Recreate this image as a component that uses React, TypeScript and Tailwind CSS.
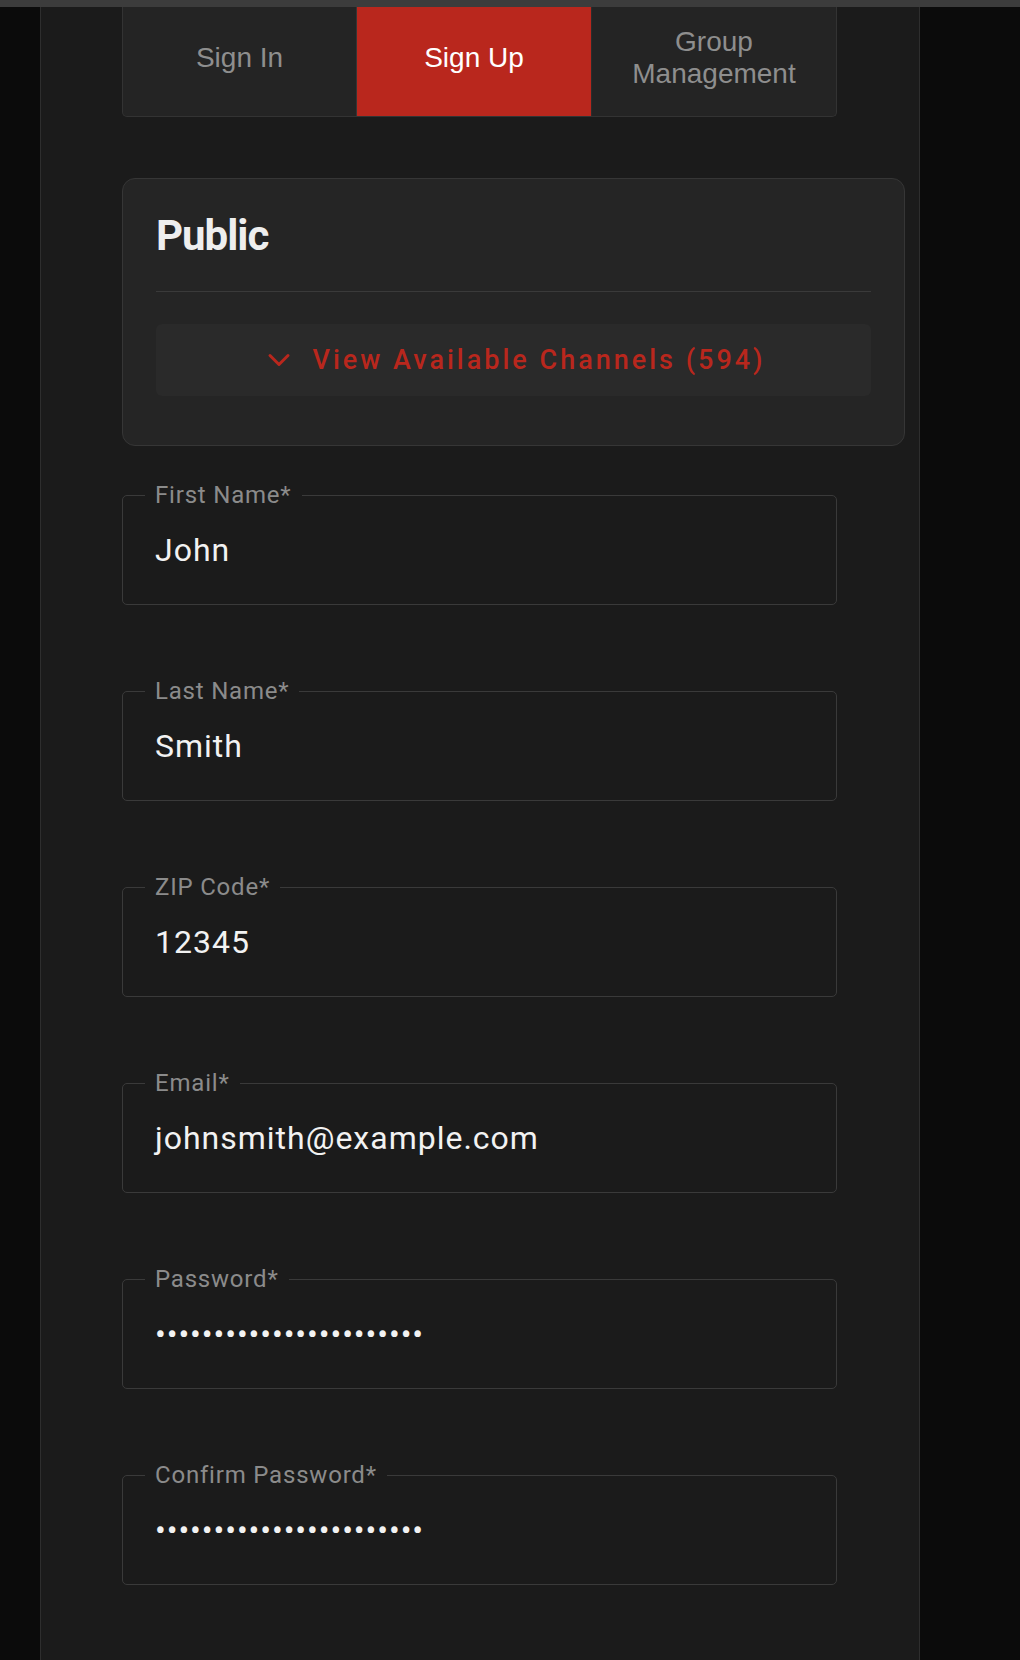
import { ChevronDown } from 'lucide-react';

interface Field {
  label: string;
  value: string;
  secret?: boolean;
}

const fields: Field[] = [
  { label: 'First Name*', value: 'John' },
  { label: 'Last Name*', value: 'Smith' },
  { label: 'ZIP Code*', value: '12345' },
  { label: 'Email*', value: 'johnsmith@example.com' },
  { label: 'Password*', value: '•'.repeat(23), secret: true },
  { label: 'Confirm Password*', value: '•'.repeat(23), secret: true },
];

const roboto = { fontFamily: 'Roboto, "Noto Sans", sans-serif' };
const helv = { fontFamily: '"Liberation Sans", Arial, sans-serif' };

function Tabs() {
  return (
    <div
      className="flex h-[117px] w-[715px] overflow-hidden rounded-b-[5px] border-x border-b border-[#333333] bg-[#242424] text-[28px] leading-[32px]"
      style={helv}
    >
      <div className="flex w-[234px] items-center justify-center border-r border-[#363636] text-[#8e8e8e]">
        Sign In
      </div>
      <div className="flex w-[234px] items-center justify-center bg-[#b9271d] text-white">
        Sign Up
      </div>
      <div className="flex flex-1 items-center justify-center border-l border-[#2c2c2c] text-center text-[#8e8e8e]">
        Group
        <br />
        Management
      </div>
    </div>
  );
}

function ChannelsCard() {
  return (
    <div className="mt-[61px] w-[783px] rounded-[13px] border border-[#363636] bg-[#252525] px-[33px] pt-[32px] pb-[49px]">
      <h2
        className="text-[42px] font-bold leading-[49px] tracking-[-1px] text-[#eeeeee]"
        style={roboto}
      >
        Public
      </h2>
      <div className="mt-[31px] h-px bg-[#3a3a3a]" />
      <button
        type="button"
        className="mt-[32px] flex h-[72px] w-full items-center justify-center gap-[15px] rounded-[6px] bg-[#2a2a2a] text-[#b9271d]"
      >
        <ChevronDown size={36} strokeWidth={2} />
        <span
          className="text-[27px] font-medium tracking-[3px]"
          style={roboto}
        >
          View Available Channels (594)
        </span>
      </button>
    </div>
  );
}

function OutlinedField({ field, first }: { field: Field; first: boolean }) {
  return (
    <div
      className={`relative flex h-[110px] w-[715px] items-center rounded-[5px] border border-[#3a3a3a] pl-[32px] ${
        first ? 'mt-[49px]' : 'mt-[86px]'
      }`}
      style={roboto}
    >
      <span className="absolute -top-[13px] left-[22px] bg-[#1b1b1b] px-[10px] text-[24px] leading-[24px] tracking-[0.8px] text-[#8b8b8b]">
        {field.label}
      </span>
      <span
        className={
          field.secret
            ? 'text-[32px] tracking-[0.9px] text-[#f2f2f2]'
            : 'text-[32px] tracking-[1px] text-[#f2f2f2]'
        }
      >
        {field.value}
      </span>
    </div>
  );
}

export default function App() {
  return (
    <div className="relative min-h-[1660px] bg-[#0b0b0b]">
      <div className="absolute inset-x-0 top-0 z-10 h-[7px] bg-[#3c3c3c]" />
      <div className="ml-[40px] min-h-[1660px] w-[880px] border-x border-[#2e2e2e] bg-[#1b1b1b] pl-[81px]">
        <Tabs />
        <ChannelsCard />
        {fields.map((f, i) => (
          <OutlinedField key={f.label} field={f} first={i === 0} />
        ))}
      </div>
    </div>
  );
}
